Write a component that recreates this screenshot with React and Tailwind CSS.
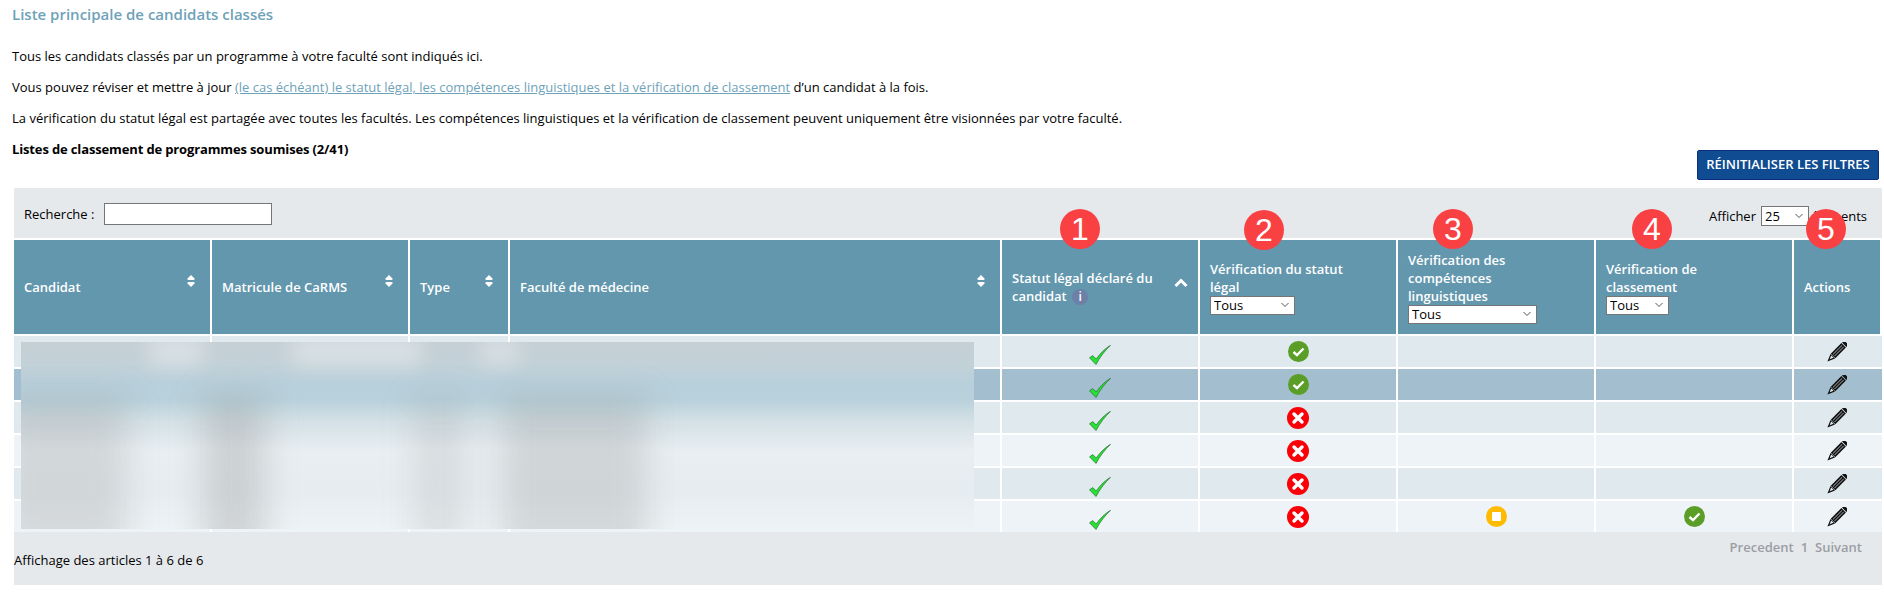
import React from 'react'

const rowStyles = ['bg-[#dfe9ee]', 'bg-[#a3bfcf]', 'bg-[#dfe9ee]', 'bg-[#edf3f6]', 'bg-[#dfe9ee]', 'bg-[#edf3f6]']
const legal = ['ok', 'ok', 'no', 'no', 'no', 'no']

// numbered callouts that sit over the table header
const callouts = [
  { n: 1, pos: 'left-[1060px] top-[209px]' },
  { n: 2, pos: 'left-[1244px] top-[210px]' },
  { n: 3, pos: 'left-[1433px] top-[209px]' },
  { n: 4, pos: 'left-[1632px] top-[209px]' },
  { n: 5, pos: 'left-[1806px] top-[209px]' },
]

const SortIcon = () => (
  <svg width="8" height="12" viewBox="0 0 8 12" className="mb-[12px] mr-[5px] shrink-0" fill="#fff">
    <path d="M4 0 L8 4 L6.6 5 L1.4 5 L0 4 Z" />
    <path d="M4 12 L8 8 L6.6 7 L1.4 7 L0 8 Z" />
  </svg>
)

const ChevronUp = () => (
  <svg width="14" height="10" viewBox="0 0 14 10" className="mb-[8px] shrink-0" fill="none" stroke="#fff" strokeWidth="3">
    <path d="M1.5 8 L7 2.5 L12.5 8" />
  </svg>
)

const GreenCheck = () => (
  <svg width="22" height="20" viewBox="0 0 22 20" className="mx-auto mt-[6px] block">
    <path d="M0.5 12.8 L3.8 10.6 L7.2 14 C11 8.5 16 3.5 21.5 0.3 C16 5.5 11 12 7 19.5 Z" fill="#26e232" stroke="#1f5a28" strokeWidth="0.6" />
  </svg>
)

const OkCircle = () => (
  <svg width="21" height="21" viewBox="0 0 21 21" className="mx-auto block">
    <circle cx="10.5" cy="10.5" r="10.5" fill="#5a9e28" />
    <path d="M5.5 11 L9 14.2 L15.5 7.5" fill="none" stroke="#fff" strokeWidth="2.4" />
  </svg>
)

const NoCircle = () => (
  <svg width="22" height="22" viewBox="0 0 22 22" className="mx-auto block">
    <circle cx="11" cy="11" r="11" fill="#fb0007" />
    <path d="M7 7 L15 15 M15 7 L7 15" fill="none" stroke="#fff" strokeWidth="3.4" strokeLinecap="round" />
  </svg>
)

const PendingCircle = () => (
  <svg width="21" height="21" viewBox="0 0 21 21" className="mx-auto block">
    <circle cx="10.5" cy="10.5" r="10.5" fill="#ffbb00" />
    <rect x="6" y="6" width="9" height="9" rx="1" fill="#fff" />
  </svg>
)

const Pencil = () => (
  <svg width="20" height="20" viewBox="0 0 20 20" className="mx-auto block -translate-x-[1px]">
    <g transform="rotate(45 10 10)">
      <rect x="6.8" y="-3.2" width="6.4" height="3" rx="0.8" fill="#111" />
      <rect x="6.8" y="0.6" width="6.4" height="15" fill="#111" />
      <path d="M8.9 1.6 V14.8 M11.1 1.6 V14.8" stroke="#e6edf0" strokeWidth="0.7" />
      <path d="M6.8 16 H13.2 L10 23.5 Z" fill="#111" />
      <path d="M8.4 16.6 H11.6 L10 20.4 Z" fill="#e6edf0" />
    </g>
  </svg>
)

const HeaderCell = ({ children, className = '' }) => (
  <th className={`h-[96px] border-r-2 border-b-2 border-white px-[10px] text-left align-middle font-semibold leading-[18px] text-white ${className}`}>
    {children}
  </th>
)

const SortedHeader = ({ label }) => (
  <div className="flex items-center justify-between">
    <span>{label}</span>
    <SortIcon />
  </div>
)

// native select with the thin grey arrow of the reference drawn over it
const Select = ({ width, height, value }) => (
  <span className={`relative block ${width} ${height}`}>
    <select className={`block ${width} ${height} appearance-none border border-[#767676] bg-white pl-[3px] text-[13px] leading-[16px] font-normal text-black`}>
      <option>{value}</option>
    </select>
    <svg width="8" height="5" viewBox="0 0 8 5" className="pointer-events-none absolute right-[6px] top-1/2 -translate-y-1/2" fill="none" stroke="#555" strokeWidth="1">
      <path d="M0.5 0.5 L4 4 L7.5 0.5" />
    </svg>
  </span>
)

// blurred block that hides the candidate data
const lowerStrips = [
  'w-[128px] bg-[#8f8f8f]/24',
  'w-[78px]',
  'w-[64px] bg-[#808080]/26',
  'w-[153px]',
  'w-[50px] bg-[#808080]/16',
  'w-[39px]',
  'w-[148px] bg-[#808080]/22',
  'w-[313px]',
]

const upperPatches = [
  'w-[150px]',
  'w-[55px] bg-white/35',
  'w-[90px]',
  'w-[130px] bg-white/35',
  'w-[60px]',
  'w-[40px] bg-white/30',
  'w-[440px]',
]

const RedactedBlock = () => (
  <div className="absolute left-[21px] top-[342px] z-10 h-[187px] w-[953px] overflow-hidden bg-[linear-gradient(180deg,#c5cfd5_0%,#c3d1d8_12%,#b8d0db_22%,#b9d1db_31%,#d3e0e6_42%,#e8eef1_58%,#e6edf0_80%,#edf2f5_100%)]">
    <div className="flex h-[32px] -translate-x-[20px] -translate-y-[8px] blur-[10px]">
      {upperPatches.map((s, i) => (
        <div key={i} className={`h-full ${s}`} />
      ))}
    </div>
    <div className="flex h-[190px] -translate-x-[20px] -translate-y-[-22px] blur-[16px]">
      {lowerStrips.map((s, i) => (
        <div key={i} className={`h-full ${s}`} />
      ))}
    </div>
  </div>
)

export default function App() {
  return (
    <div className="relative h-[594px] w-[1884px] overflow-hidden bg-white font-['Open_Sans',sans-serif] text-[13px] text-black">
      <div className="pt-[4px]">
        <h2 className="ml-[12px] mb-[23px] text-[15px] leading-[20px] font-semibold text-[#6ea2b8]">
          Liste principale de candidats classés
        </h2>
        <p className="ml-[12px] mb-[13px] leading-[18px]">Tous les candidats classés par un programme à votre faculté sont indiqués ici.</p>
        <p className="ml-[12px] mb-[13px] leading-[18px]">
          Vous pouvez réviser et mettre à jour{' '}
          <a href="#" className="text-[#6ea2b8] underline">
            (le cas échéant) le statut légal, les compétences linguistiques et la vérification de classement
          </a>{' '}
          d’un candidat à la fois.
        </p>
        <p className="ml-[12px] mb-[13px] leading-[18px]">
          La vérification du statut légal est partagée avec toutes les facultés. Les compétences linguistiques et la vérification de classement peuvent uniquement être visionnées par votre faculté.
        </p>
        <div className="mb-[8px] flex items-start justify-between pl-[12px] pr-[5px]">
          <strong className="font-bold leading-[18px] tracking-[-0.14px]">Listes de classement de programmes soumises (2/41)</strong>
          <button className="mt-[10px] h-[30px] w-[182px] rounded-[2px] border border-[#0b2f7d] bg-[#0f4c92] text-[13px] font-semibold text-white">
            RÉINITIALISER LES FILTRES
          </button>
        </div>
      </div>

      <div className="ml-[14px] w-[1868px]">
        <div className="mb-[2px] flex h-[50px] items-start justify-between bg-[#e6e9ec] pt-[15px] pl-[10px] pr-[15px]">
          <label className="flex items-center gap-[10px] leading-[22px]">
            Recherche :
            <input className="h-[22px] w-[168px] border border-[#767676] bg-white" />
          </label>
          <label className="flex items-center gap-[5px] pt-[3px] leading-[20px]">
            Afficher
            <Select width="w-[48px]" height="h-[20px]" value="25" />
            <span className="-ml-[3px]">éléments</span>
          </label>
        </div>

        <table className="w-[1868px] table-fixed border-separate border-spacing-0 bg-[#6397ae]">
          <colgroup>
            <col className="w-[198px]" />
            <col className="w-[198px]" />
            <col className="w-[100px]" />
            <col className="w-[492px]" />
            <col className="w-[198px]" />
            <col className="w-[198px]" />
            <col className="w-[198px]" />
            <col className="w-[198px]" />
            <col className="w-[88px]" />
          </colgroup>
          <thead>
            <tr>
              <HeaderCell><SortedHeader label="Candidat" /></HeaderCell>
              <HeaderCell><SortedHeader label="Matricule de CaRMS" /></HeaderCell>
              <HeaderCell><SortedHeader label="Type" /></HeaderCell>
              <HeaderCell><SortedHeader label="Faculté de médecine" /></HeaderCell>
              <HeaderCell>
                <div className="flex items-center justify-between">
                  <span>
                    Statut légal déclaré du
                    <br />
                    candidat{' '}
                    <span className="ml-[2px] inline-flex h-[16px] w-[16px] items-center justify-center rounded-full bg-[#6d80a8] text-[12px] leading-none">i</span>
                  </span>
                  <ChevronUp />
                </div>
              </HeaderCell>
              <HeaderCell>
                Vérification du statut
                <br />
                légal
                <Select width="w-[85px]" height="h-[19px]" value="Tous" />
              </HeaderCell>
              <HeaderCell>
                Vérification des
                <br />
                compétences
                <br />
                linguistiques
                <Select width="w-[129px]" height="h-[19px]" value="Tous" />
              </HeaderCell>
              <HeaderCell>
                Vérification de
                <br />
                classement
                <Select width="w-[63px]" height="h-[19px]" value="Tous" />
              </HeaderCell>
              <HeaderCell className="border-r-0">Actions</HeaderCell>
            </tr>
          </thead>
          <tbody>
            {rowStyles.map((bg, i) => {
              const last = i === rowStyles.length - 1
              const cell = `${bg} border-white align-middle ${last ? 'h-[31px]' : 'h-[33px] border-b-2'}`
              return (
                <tr key={i}>
                  <td className={`${cell} border-r-2`} />
                  <td className={`${cell} border-r-2`} />
                  <td className={`${cell} border-r-2`} />
                  <td className={`${cell} border-r-2`} />
                  <td className={`${cell} border-r-2`}><GreenCheck /></td>
                  <td className={`${cell} border-r-2`}>{legal[i] === 'ok' ? <OkCircle /> : <NoCircle />}</td>
                  <td className={`${cell} border-r-2`}>{last && <PendingCircle />}</td>
                  <td className={`${cell} border-r-2`}>{last && <OkCircle />}</td>
                  <td className={cell}><Pencil /></td>
                </tr>
              )
            })}
          </tbody>
        </table>

        <div className="flex h-[53px] items-start justify-between bg-[#e6e9ec] pr-[20px]">
          <span className="mt-[19px] leading-[18px]">Affichage des articles 1 à 6 de 6</span>
          <span className="mt-[6px] flex gap-[7px] leading-[18px] font-semibold text-[#9a9ea3]">
            <span>Precedent</span>
            <span>1</span>
            <span>Suivant</span>
          </span>
        </div>
      </div>

      <RedactedBlock />

      {callouts.map((c) => (
        <div
          key={c.n}
          className={`absolute ${c.pos} z-20 flex h-[40px] w-[40px] items-center justify-center rounded-full bg-[#f94144] font-['Liberation_Sans',sans-serif] text-[32px] leading-none text-white`}
        >
          {c.n}
        </div>
      ))}
    </div>
  )
}
